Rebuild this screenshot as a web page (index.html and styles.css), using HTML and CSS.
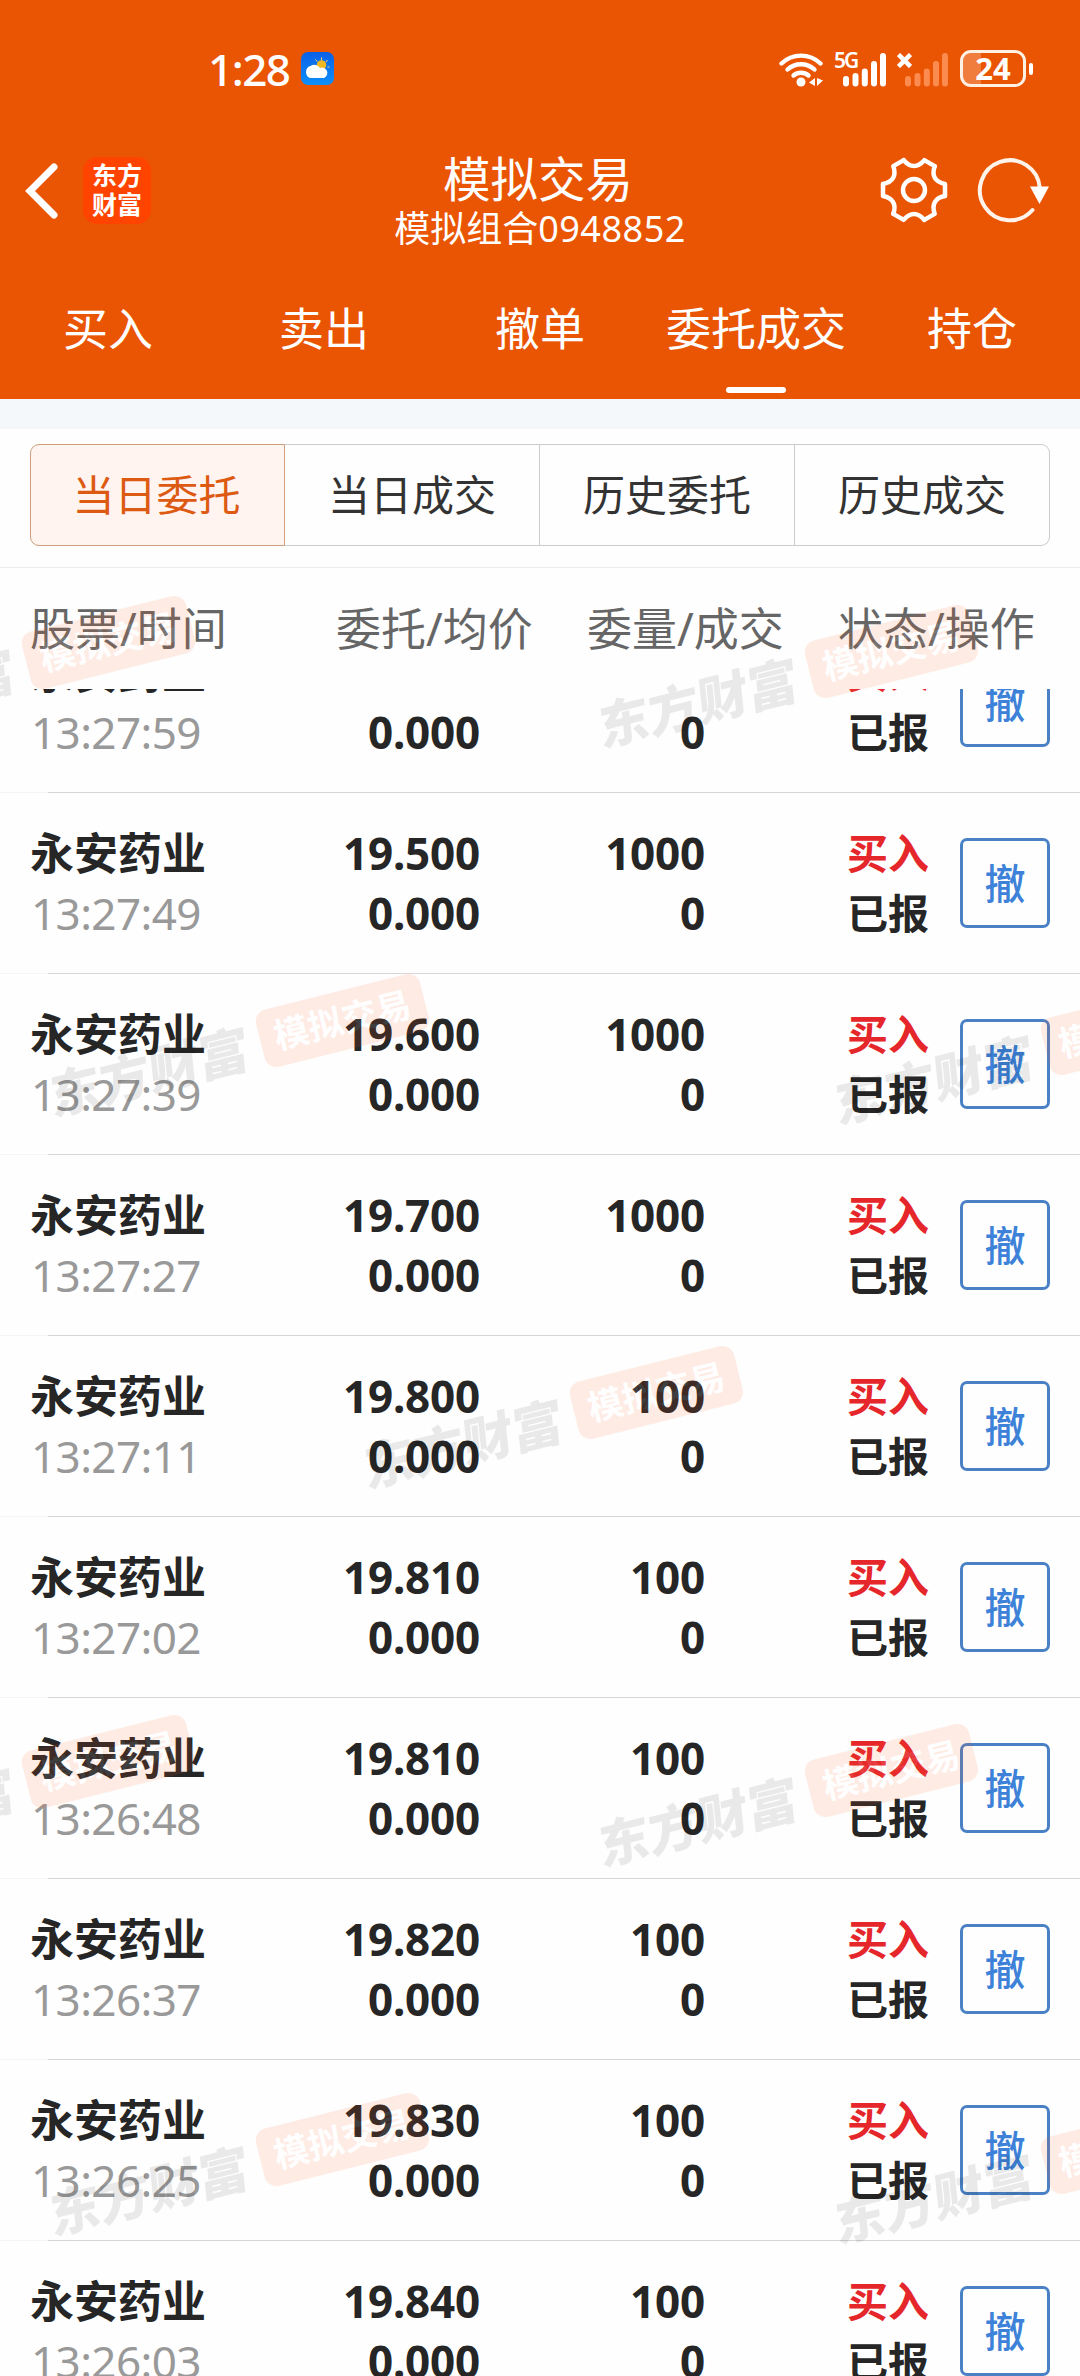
FILE: index.html
```
<!DOCTYPE html>
<html lang="zh-CN">
<head>
    <meta charset="UTF-8">
    <meta name="viewport" content="width=device-width, initial-scale=1.0">
    <title>模拟交易</title>
    <link rel="stylesheet" href="styles.css">
</head>
<body>
    <div class="app">
        <header class="header">
            <div class="status-bar">
                <span class="clock">1:28</span>
                <svg class="weather" viewBox="0 0 33 33">
                    <defs>
                        <linearGradient id="sky" x1="0" y1="0" x2="0" y2="1">
                            <stop offset="0" stop-color="#0a60e6"/>
                            <stop offset="1" stop-color="#0d90fb"/>
                        </linearGradient>
                    </defs>
                    <rect width="33" height="33" rx="7" fill="url(#sky)"/>
                    <path d="M20.5 5.5v3M14.500 7.500l1.500 2M26.500 8l-1.500 2M28.500 15h-2" stroke="#f5d878" stroke-width="1"/>
                    <circle cx="20.500" cy="13" r="4.800" fill="#f3b71f"/>
                    <path d="M10.500 26a5 6 0 0 1-1-12 6.500 6 0 0 1 9.500 2 5 5 0 0 1 4 10z" fill="#fff"/>
                </svg>
                <div class="status-icons">
                    <svg class="wifi" viewBox="0 0 44 36" fill="none" stroke="#fff" stroke-width="4.400" stroke-linecap="round">
                        <path d="M2.500 12.500a28 28 0 0 1 39 0"/>
                        <path d="M8.500 18.500a20 20 0 0 1 27 0"/>
                        <path d="M14.500 24.500a11.500 11.500 0 0 1 15 0"/>
                        <circle cx="22" cy="31" r="4.500" fill="#fff" stroke="none"/>
                        <path d="M36 27v8l-6-3.500zM38 27v8l6-5.500z" fill="#fff" stroke="none"/>
                    </svg>
                    <div class="signal">
                        <span class="net">5G</span>
                        <svg viewBox="0 0 44 36" stroke="#fff" stroke-width="6" stroke-linecap="round">
                            <path d="M4 28v4.500M13.500 25v7.500M22.800 20.500v12M32 13v19.500M41 5v27.500"/>
                        </svg>
                    </div>
                    <div class="signal signal-off">
                        <svg class="no-sim" viewBox="0 0 15 15" stroke="#fff" stroke-width="4.500"><path d="M1.500 1.500l12 12M13.500 1.500l-12 12"/></svg>
                        <svg viewBox="0 0 44 36" stroke="#fc8b50" stroke-width="6" stroke-linecap="round">
                            <path d="M4 28v4.500M13.500 25v7.500M22.800 20.500v12M32 13v19.500M41 5v27.500"/>
                        </svg>
                    </div>
                    <div class="battery">24</div>
                    <div class="battery-cap"></div>
                </div>
            </div>

            <div class="nav">
                <svg class="back" viewBox="0 0 34 56" fill="none" stroke="#fff" stroke-width="7" stroke-linecap="round">
                    <path d="M29 4L5 28l24 24"/>
                </svg>
                <div class="logo">东方<br>财富</div>
                <div class="title">
                    <h1>模拟交易</h1>
                    <p>模拟组合<span>0948852</span></p>
                </div>
                <svg class="gear" viewBox="-35 -35 70 70" fill="none" stroke="#fff" stroke-width="4.500" stroke-linecap="round" stroke-linejoin="round">
                    <path id="tooth" d="M31 6V-6C21-8 17.400-14.200 20.700-23.800"/>
                    <use href="#tooth" transform="rotate(60)"/>
                    <use href="#tooth" transform="rotate(120)"/>
                    <use href="#tooth" transform="rotate(180)"/>
                    <use href="#tooth" transform="rotate(240)"/>
                    <use href="#tooth" transform="rotate(300)"/>
                    <circle r="11"/>
                </svg>
                <svg class="refresh" viewBox="-35 -35 75 70" fill="none" stroke="#fff4ec" stroke-width="4" stroke-linecap="round">
                    <path d="M22.500 20A30 30 0 1 1 29.800-2"/>
                    <path d="M20-3.500h19L29.500 14z" fill="#fff" stroke="none"/>
                </svg>
            </div>

            <nav class="tabs">
                <a>买入</a>
                <a>卖出</a>
                <a>撤单</a>
                <a class="active">委托成交</a>
                <a>持仓</a>
            </nav>
        </header>

        <div class="filter">
            <div class="segment">
                <button class="active">当日委托</button>
                <button>当日成交</button>
                <button>历史委托</button>
                <button>历史成交</button>
            </div>
        </div>

        <div class="list-head">
            <span>股票/时间</span>
            <span>委托/均价</span>
            <span>委量/成交</span>
            <span>状态/操作</span>
        </div>

        <div class="list">
            <div class="row">
                <div class="stock"><b>永安药业</b><time>13:27:59</time></div>
                <div class="num">19.400<br>0.000</div>
                <div class="num">1000<br>0</div>
                <div class="state"><em>买入</em>已报</div>
                <button class="cancel">撤</button>
            </div>
            <div class="row">
                <div class="stock"><b>永安药业</b><time>13:27:49</time></div>
                <div class="num">19.500<br>0.000</div>
                <div class="num">1000<br>0</div>
                <div class="state"><em>买入</em>已报</div>
                <button class="cancel">撤</button>
            </div>
            <div class="row">
                <div class="stock"><b>永安药业</b><time>13:27:39</time></div>
                <div class="num">19.600<br>0.000</div>
                <div class="num">1000<br>0</div>
                <div class="state"><em>买入</em>已报</div>
                <button class="cancel">撤</button>
            </div>
            <div class="row">
                <div class="stock"><b>永安药业</b><time>13:27:27</time></div>
                <div class="num">19.700<br>0.000</div>
                <div class="num">1000<br>0</div>
                <div class="state"><em>买入</em>已报</div>
                <button class="cancel">撤</button>
            </div>
            <div class="row">
                <div class="stock"><b>永安药业</b><time>13:27:11</time></div>
                <div class="num">19.800<br>0.000</div>
                <div class="num">100<br>0</div>
                <div class="state"><em>买入</em>已报</div>
                <button class="cancel">撤</button>
            </div>
            <div class="row">
                <div class="stock"><b>永安药业</b><time>13:27:02</time></div>
                <div class="num">19.810<br>0.000</div>
                <div class="num">100<br>0</div>
                <div class="state"><em>买入</em>已报</div>
                <button class="cancel">撤</button>
            </div>
            <div class="row">
                <div class="stock"><b>永安药业</b><time>13:26:48</time></div>
                <div class="num">19.810<br>0.000</div>
                <div class="num">100<br>0</div>
                <div class="state"><em>买入</em>已报</div>
                <button class="cancel">撤</button>
            </div>
            <div class="row">
                <div class="stock"><b>永安药业</b><time>13:26:37</time></div>
                <div class="num">19.820<br>0.000</div>
                <div class="num">100<br>0</div>
                <div class="state"><em>买入</em>已报</div>
                <button class="cancel">撤</button>
            </div>
            <div class="row">
                <div class="stock"><b>永安药业</b><time>13:26:25</time></div>
                <div class="num">19.830<br>0.000</div>
                <div class="num">100<br>0</div>
                <div class="state"><em>买入</em>已报</div>
                <button class="cancel">撤</button>
            </div>
            <div class="row">
                <div class="stock"><b>永安药业</b><time>13:26:03</time></div>
                <div class="num">19.840<br>0.000</div>
                <div class="num">100<br>0</div>
                <div class="state"><em>买入</em>已报</div>
                <button class="cancel">撤</button>
            </div>
        </div>

        <!-- 水印 -->
        <div class="watermarks">
            <div class="wm wm-1"><i>东方财富</i><span>模拟交易</span></div>
            <div class="wm wm-2"><i>东方财富</i><span>模拟交易</span></div>
            <div class="wm wm-3"><i>东方财富</i><span>模拟交易</span></div>
            <div class="wm wm-4"><i>东方财富</i><span>模拟交易</span></div>
            <div class="wm wm-5"><i>东方财富</i><span>模拟交易</span></div>
            <div class="wm wm-6"><i>东方财富</i><span>模拟交易</span></div>
            <div class="wm wm-7"><i>东方财富</i><span>模拟交易</span></div>
            <div class="wm wm-8"><i>东方财富</i><span>模拟交易</span></div>
            <div class="wm wm-9"><i>东方财富</i><span>模拟交易</span></div>
        </div>
    </div>
</body>
</html>
```

FILE: styles.css
```
* { margin: 0; padding: 0; box-sizing: border-box; }

body {
    font-family: "Noto Sans", "Noto Sans CJK SC", sans-serif;
    background: #fefefe;
    color: #262626;
}

button {
    font-family: inherit;
    background: none;
    border: none;
}

svg { display: block; }

.app {
    position: relative;
    width: 1080px;
    height: 2376px;
    display: flex;
    flex-direction: column;
    overflow: hidden;
}

/* 顶部 */
.header {
    height: 399px;
    background: #ea5504;
    color: #fff;
    flex: none;
}

.status-bar {
    height: 137px;
    padding: 0 47px 0 208px;
    display: flex;
    align-items: center;
}

.clock {
    width: 93px;
    font-size: 44px;
    font-weight: 500;
    line-height: 50px;
    letter-spacing: -1.500px;
}

.weather { width: 33px; height: 33px; }

.status-icons {
    display: flex;
    align-items: center;
    margin-left: auto;
}

.wifi { width: 44px; height: 36px; margin-right: 19px; }

.signal {
    position: relative;
    width: 44px;
    margin-right: 18px;
}

.signal svg { width: 44px; height: 36px; }

.signal-off { margin-right: 12px; }

.net {
    position: absolute;
    left: -8px;
    top: -2px;
    font-size: 21px;
    font-weight: 600;
    line-height: 22px;
    letter-spacing: -2px;
}

.signal .no-sim {
    position: absolute;
    left: -7px;
    top: 2px;
    width: 15px;
    height: 15px;
}

.battery {
    width: 66px;
    height: 37px;
    border: 3px solid #fff1e4;
    border-radius: 11px;
    background: linear-gradient(90deg, #f07c3e 18px, transparent 18px);
    font-size: 31px;
    font-weight: 700;
    line-height: 30px;
    text-align: center;
}

.battery-cap {
    width: 4px;
    height: 12px;
    margin-left: 3px;
    border-radius: 2px;
    background: #fff;
}

.nav {
    height: 132px;
    padding-left: 25px;
    display: flex;
    align-items: flex-start;
}

.back { width: 34px; height: 56px; margin: 26px 24px 0 0; }

.logo {
    width: 68px;
    height: 67px;
    margin-top: 20px;
    padding-top: 4px;
    border-radius: 14px;
    background: #ff4400;
    font-size: 25px;
    font-weight: 700;
    line-height: 29px;
    text-align: center;
}

.title {
    width: 300px;
    margin: 14px 191px 0 237px;
    text-align: center;
}

.title h1 {
    font-size: 47.500px;
    font-weight: 400;
    line-height: 56px;
}

.title p {
    padding-left: 4px;
    font-size: 36px;
    line-height: 44px;
    white-space: nowrap;
}

.title p span { letter-spacing: .5px; }

.gear { width: 70px; height: 70px; margin-top: 18px; margin-right: 26px; }

.refresh { width: 75px; height: 70px; margin-top: 18px; flex: none; }

.tabs {
    height: 130px;
    display: grid;
    grid-template-columns: repeat(5, 1fr);
}

.tabs a {
    display: flex;
    flex-direction: column;
    align-items: center;
    padding-top: 28px;
    font-size: 45px;
    line-height: 64px;
}

.tabs .active::after {
    content: "";
    width: 60px;
    height: 6px;
    margin-top: 26px;
    border-radius: 3px;
    background: #fff;
}

/* 筛选 */
.filter {
    height: 169px;
    padding: 15px 30px 0;
    border-top: 30px solid #f5f8fa;
    border-bottom: 1px solid #ececec;
    flex: none;
}

.segment {
    display: grid;
    grid-template-columns: repeat(4, 1fr);
    height: 102px;
}

.segment button {
    border: 1px solid #ccc;
    border-left: none;
    font-size: 42px;
    line-height: 60px;
    color: #333;
}

.segment .active {
    padding-right: 2px;
    border: 1px solid #cf9f80;
    border-radius: 9px 0 0 9px;
    background: #fff4f0;
    color: #dd5a12;
}

.segment button:last-child { border-radius: 0 9px 9px 0; }

.list-head {
    height: 121px;
    padding: 29px 0 0 30px;
    display: grid;
    grid-template-columns: 306px 251px 251px 1fr;
    flex: none;
    font-size: 45px;
    line-height: 64px;
    color: #666;
}

/* 委托列表 */
.list {
    flex: 1;
    overflow: hidden;
}

.row {
    height: 181px;
    padding: 30px 30px 0;
    display: grid;
    grid-template-columns: 230px 220px 225px 142px 113px 90px;
    grid-template-areas: "stock price qty . state cancel";
    align-items: start;
    background: linear-gradient(90deg, #f5f5f5 48px, #d6d6d6 48px) bottom / 100% 1px no-repeat;
    font-size: 44px;
    line-height: 60px;
}

.row:first-child { margin-top: -77px; }

.stock b,
.stock time {
    display: block;
    font-weight: 700;
}

.stock time {
    padding-left: 1px;
    font-weight: 400;
    letter-spacing: -.600px;
    color: #999;
}

.num {
    text-align: right;
    font-weight: 700;
    letter-spacing: -.2px;
}

.state {
    grid-area: state;
    font-size: 41px;
    font-weight: 700;
}

.state em {
    display: block;
    font-style: normal;
    color: #e5262a;
}

.cancel {
    grid-area: cancel;
    width: 90px;
    height: 90px;
    margin-top: 15px;
    border: 3px solid #4a80c4;
    border-radius: 7px;
    font-size: 41px;
    font-weight: 500;
    line-height: 60px;
    color: #3d82d8;
}

/* 水印 */
.watermarks {
    position: absolute;
    inset: 568px 0 0 0;
    overflow: hidden;
    pointer-events: none;
}

.wm {
    position: absolute;
    display: flex;
    align-items: center;
    width: 384px;
    height: 60px;
    transform: rotate(-14deg);
}

.wm i {
    width: 215px;
    padding-top: 5px;
    font-size: 51px;
    font-weight: 800;
    line-height: 60px;
    font-style: normal;
    white-space: nowrap;
    color: #000;
    opacity: .08;
    transform: translateX(-2px) skewX(-8deg);
}

.wm span {
    width: 169px;
    height: 59px;
    border-radius: 12px;
    background: #ff5a1e;
    opacity: .11;
    font-size: 35px;
    font-weight: 700;
    line-height: 57px;
    text-align: center;
    color: #fff;
}

.wm-1 { left: -188px; top: 70px; }
.wm-2 { left: 595px; top: 79px; }
.wm-3 { left: 46px; top: 448px; }
.wm-4 { left: 831px; top: 456px; }
.wm-5 { left: 360px; top: 820px; }
.wm-6 { left: -188px; top: 1189px; }
.wm-7 { left: 595px; top: 1198px; }
.wm-8 { left: 46px; top: 1567px; }
.wm-9 { left: 831px; top: 1575px; }
```
